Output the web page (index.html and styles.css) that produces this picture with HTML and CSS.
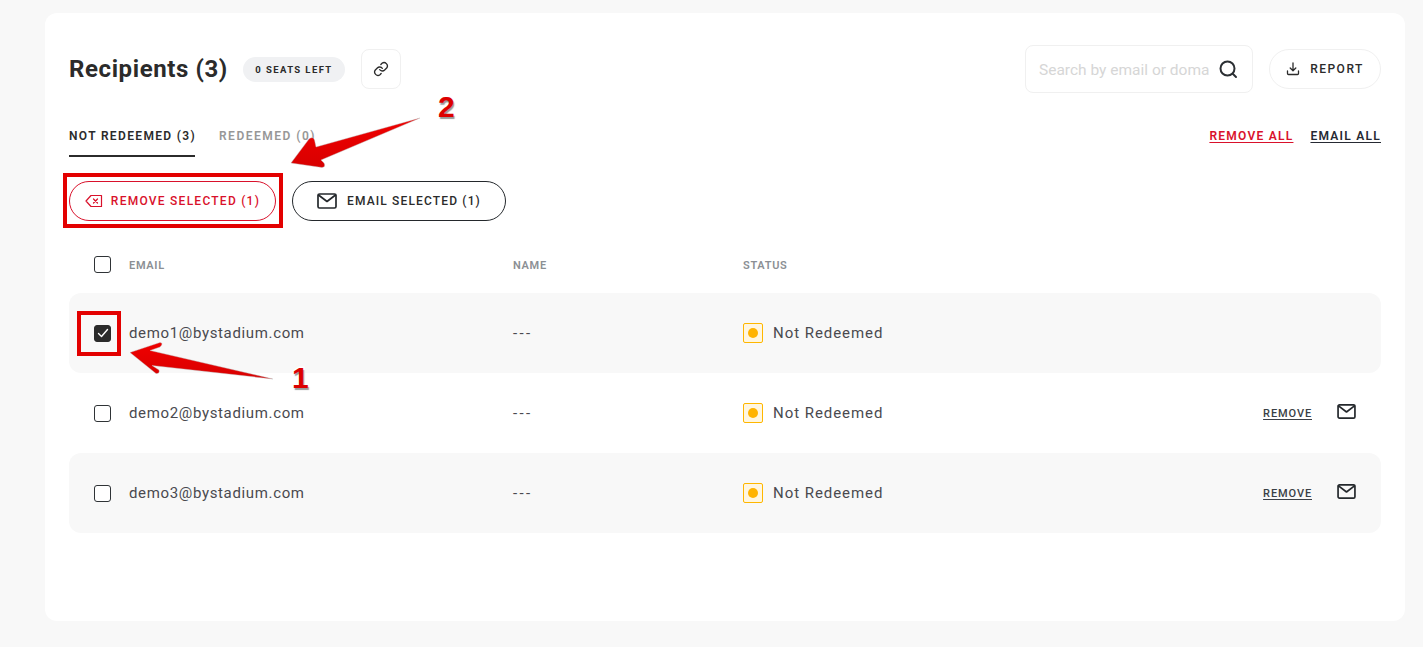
FILE: index.html
```html
<!DOCTYPE html>
<html lang="en">
<head>
<meta charset="utf-8">
<title>Recipients</title>
<link rel="stylesheet" href="styles.css">
</head>
<body>
<main class="card">
  <header class="head">
    <h1 class="title">Recipients (3)</h1>
    <span class="badge">0 SEATS LEFT</span>
    <button class="link-btn" aria-label="Copy link">
      <svg width="16" height="16" viewBox="0 0 24 24" fill="none" stroke="#2b2b2b" stroke-width="2" stroke-linecap="round" stroke-linejoin="round"><path d="M10 13a5 5 0 0 0 7.500.5l3-3a5 5 0 0 0-7-7l-1.700 1.700"/><path d="M14 11a5 5 0 0 0-7.500-.5l-3 3a5 5 0 0 0 7 7l1.700-1.700"/></svg>
    </button>
    <div class="spacer"></div>
    <label class="search">
      <input class="search-input" type="text" placeholder="Search by email or domain">
      <svg width="20" height="20" viewBox="0 0 20 20" fill="none" stroke="#2b2f33" stroke-width="2" stroke-linecap="round"><circle cx="9.500" cy="9.500" r="7"/><path d="M15 15l3 3"/></svg>
    </label>
    <button class="report">
      <svg width="14" height="14" viewBox="0 0 14 14" fill="none" stroke="#2b2b2b" stroke-width="1.300" stroke-linecap="round" stroke-linejoin="round"><path d="M7 1v7.500M4.200 6L7 8.800 9.800 6"/><path d="M1.500 9v2.500a1 1 0 0 0 1 1h9a1 1 0 0 0 1-1V9"/></svg>
      REPORT
    </button>
  </header>

  <nav class="tabs">
    <a class="tab tab-active">NOT REDEEMED (3)</a>
    <a class="tab tab-muted">REDEEMED (0)</a>
    <div class="spacer"></div>
    <a class="all all-red">REMOVE ALL</a>
    <a class="all all-dark">EMAIL ALL</a>
  </nav>

  <div class="actions">
    <button class="pill pill-red">
      <svg width="18" height="14" viewBox="0 0 18 14" fill="none" stroke="#d9112b" stroke-width="1.200" stroke-linejoin="round" stroke-linecap="round"><path d="M1 7l5-5.500h10.500v11H6z"/><path d="M8.500 5l4 4M12.500 5l-4 4"/></svg>
      REMOVE SELECTED (1)
    </button>
    <button class="pill pill-dark">
      <svg width="20" height="16" viewBox="0 0 20 16" fill="none" stroke="#24282c" stroke-width="1.700" stroke-linejoin="round" stroke-linecap="round"><rect x="1" y="1" width="18" height="14" rx="1.500"/><path d="M1.500 2l8.500 6.500L18.500 2"/></svg>
      EMAIL SELECTED (1)
    </button>
  </div>

  <section class="table">
    <div class="row row-head">
      <span class="check"></span>
      <span class="th">EMAIL</span>
      <span class="th">NAME</span>
      <span class="th">STATUS</span>
    </div>
    <div class="row row-item row-shade">
      <span class="check check-on">
        <svg width="12" height="10" viewBox="0 0 12 10" fill="none" stroke="#fff" stroke-width="1.400" stroke-linecap="round" stroke-linejoin="round"><path d="M1.500 5.500L4.500 8.500 10.500 1.500"/></svg>
      </span>
      <span class="cell">demo1@bystadium.com</span>
      <span class="cell cell-dash">---</span>
      <span class="status"><i class="dot-box"><i class="dot"></i></i>Not Redeemed</span>
    </div>
    <div class="row row-item">
      <span class="check"></span>
      <span class="cell">demo2@bystadium.com</span>
      <span class="cell cell-dash">---</span>
      <span class="status"><i class="dot-box"><i class="dot"></i></i>Not Redeemed</span>
      <span class="row-actions">
        <a class="remove">REMOVE</a>
        <svg class="mail" width="19" height="15" viewBox="0 0 20 16" fill="none" stroke="#24282c" stroke-width="1.800" stroke-linejoin="round" stroke-linecap="round"><rect x="1" y="1" width="18" height="14" rx="1.500"/><path d="M1.500 2l8.500 6.500L18.500 2"/></svg>
      </span>
    </div>
    <div class="row row-item row-shade">
      <span class="check"></span>
      <span class="cell">demo3@bystadium.com</span>
      <span class="cell cell-dash">---</span>
      <span class="status"><i class="dot-box"><i class="dot"></i></i>Not Redeemed</span>
      <span class="row-actions">
        <a class="remove">REMOVE</a>
        <svg class="mail" width="19" height="15" viewBox="0 0 20 16" fill="none" stroke="#24282c" stroke-width="1.800" stroke-linejoin="round" stroke-linecap="round"><rect x="1" y="1" width="18" height="14" rx="1.500"/><path d="M1.500 2l8.500 6.500L18.500 2"/></svg>
      </span>
    </div>
  </section>
</main>

<svg class="marks" width="1423" height="647" viewBox="0 0 1423 647" aria-hidden="true">
  <defs>
    <linearGradient id="ar" x1="0" y1="0" x2="0" y2="1"><stop offset="0" stop-color="#f00000"/><stop offset="1" stop-color="#d80000"/></linearGradient>
  </defs>
  <rect x="65" y="175" width="216" height="51" fill="none" stroke="#e30000" stroke-width="4"/>
  <rect x="79" y="313" width="40" height="41" fill="none" stroke="#e30000" stroke-width="4"/>
  <path d="M420 118L316 147L314.500 140Q313 136 309 139L291 163L322 167.500Q326 167 324 163L321 160Z" fill="url(#ar)" stroke="#b8b8b8" stroke-width=".4"/>
  <path d="M273 379L150 350.500L160 347Q164 343 160 342.500L130 352.500L156 373.500Q160 374 159 370L152 365.500Z" fill="url(#ar)" stroke="#b8b8b8" stroke-width=".4"/>
</svg>
<span class="num num-two">2</span>
<span class="num num-one">1</span>
</body>
</html>
```

FILE: styles.css
```css
* { box-sizing: border-box; }
html, body { margin: 0; height: 100%; }
body {
  background: #f8f8f8;
  font-family: "Roboto", "Liberation Sans", sans-serif;
  color: #2b2b2b;
  padding: 13px 18px 26px 45px;
  overflow: hidden;
}
.card {
  width: 1360px;
  height: 608px;
  background: #fff;
  border-radius: 12px;
  padding: 32px 24px 0;
}
.head { display: flex; align-items: center; height: 48px; }
.title {
  margin: 0;
  font-size: 24px;
  font-weight: 700;
  letter-spacing: .6px;
  color: #2b2b2b;
  width: 174px;
  white-space: nowrap;
  margin-top: -1px;
}
.badge {
  width: 102px;
  height: 25px;
  border-radius: 13px;
  background: #f0f1f3;
  font-size: 9.500px;
  font-weight: 700;
  letter-spacing: 1.400px;
  display: flex;
  align-items: center;
  justify-content: center;
  margin-right: 16px;
}
.link-btn {
  width: 40px;
  height: 40px;
  border: 1px solid #f0f0f0;
  border-radius: 8px;
  background: #fff;
  padding: 0;
  display: flex;
  align-items: center;
  justify-content: center;
}
.spacer { flex: 1; }
.search {
  width: 228px;
  height: 48px;
  border: 1px solid #f0f0f0;
  border-radius: 8px;
  display: flex;
  align-items: center;
  padding: 0 14px 0 13px;
  gap: 8px;
  margin-right: 16px;
}
.search-input {
  flex: 1;
  min-width: 0;
  border: 0;
  outline: 0;
  padding: 2px 0 0;
  background: transparent;
  font: 400 15.500px "Roboto", "Liberation Sans", sans-serif;
}
.search-input::placeholder { color: #d6d6d6; opacity: 1; }
.report {
  width: 112px;
  height: 40px;
  border: 1px solid #f0f0f0;
  border-radius: 20px;
  background: #fff;
  color: #2b2b2b;
  font: 500 12px "Roboto", "Liberation Sans", sans-serif;
  letter-spacing: 1.500px;
  display: flex;
  align-items: center;
  justify-content: center;
  gap: 10px;
  padding: 0;
}
.tabs { display: flex; align-items: flex-start; height: 49px; margin-top: 15px; padding-top: 19px; }
.tab {
  height: 30px;
  font-size: 12px;
  font-weight: 600;
  letter-spacing: 1.350px;
  line-height: 18px;
  white-space: nowrap;
}
.tab-active { width: 126px; border-bottom: 2px solid #2b2b2b; margin-right: 24px; }
.tab-muted { color: #979797; letter-spacing: 1.500px; }
.all {
  font-size: 12px;
  font-weight: 600;
  letter-spacing: 1.250px;
  line-height: 18px;
  text-decoration: underline;
  text-underline-offset: 2px;
}
.all-red { color: #d9112b; margin-right: 17px; }
.all-dark { color: #262a33; }
.actions { display: flex; gap: 16px; margin-top: 24px; }
.pill {
  height: 40px;
  border-radius: 20px;
  background: #fff;
  font: 500 12px "Roboto", "Liberation Sans", sans-serif;
  letter-spacing: 1.250px;
  display: flex;
  align-items: center;
  justify-content: center;
  padding: 0;
  white-space: nowrap;
}
.pill-red { width: 207px; border: 1px solid #d9112b; color: #d9112b; gap: 8px; }
.pill-dark { width: 214px; border: 1px solid #24282c; color: #2b2b2b; gap: 10px; letter-spacing: 1.150px; }
.table { margin-top: 24px; }
.row {
  display: grid;
  grid-template-columns: 35px 384px 230px 1fr auto;
  align-items: center;
  padding-left: 25px;
  padding-right: 25px;
}
.row-head { height: 48px; padding-bottom: 8px; }
.row-item { height: 80px; }
.row-shade { background: #f8f8f8; border-radius: 12px; }
.th { font-size: 11px; font-weight: 600; letter-spacing: .7px; color: #8b8f94; }
.check {
  width: 17px;
  height: 17px;
  border: 1.500px solid #2f3336;
  border-radius: 3px;
  display: flex;
  align-items: center;
  justify-content: center;
  background: #fff;
}
.row-head .check { margin-top: -1px; }
.check-on { background: #2b2b2b; border-color: #2b2b2b; }
.cell { font-size: 15px; letter-spacing: .65px; color: #4a4a4f; }
.cell-dash { letter-spacing: 2.400px; }
.status { display: flex; align-items: center; gap: 10px; font-size: 15px; letter-spacing: .95px; color: #4a4a4f; }
.dot-box {
  width: 20px;
  height: 20px;
  border: 1px solid #ffb700;
  border-radius: 2px;
  background: #fff6e0;
  display: flex;
  align-items: center;
  justify-content: center;
}
.dot { width: 10px; height: 10px; border-radius: 50%; background: #ffb300; }
.row-actions { display: flex; align-items: center; gap: 25px; }
.remove {
  font-size: 11px;
  font-weight: 500;
  letter-spacing: .9px;
  color: #3a3f46;
  text-decoration: underline;
  text-underline-offset: 2px;
}
.mail { margin-top: -3px; }
.marks { position: absolute; left: 0; top: 0; pointer-events: none; }
.num {
  position: absolute;
  font-family: "Liberation Sans", sans-serif;
  font-weight: 700;
  font-size: 30px;
  line-height: 30px;
  color: #dc0000;
  -webkit-text-stroke: 3px #fff;
  paint-order: stroke fill;
  text-shadow: 1px 1.500px 1px #999;
}
.num-two { left: 438px; top: 92px; }
.num-one { left: 292px; top: 363px; }
```
